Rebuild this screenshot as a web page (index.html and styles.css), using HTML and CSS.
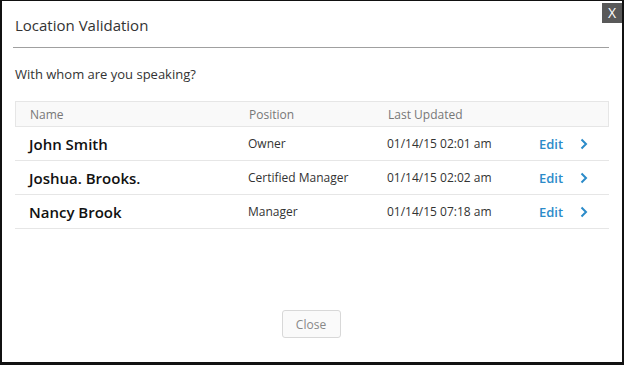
FILE: index.html
```html
<!DOCTYPE html>
<html lang="en">
<head>
  <meta charset="UTF-8" />
  <title>Location Validation</title>
  <link rel="stylesheet" href="styles.css">
</head>
<body>
  <div class="modal">
    <button class="close-x">X</button>
    <h2 class="modal-title">Location Validation</h2>
    <p class="question">With whom are you speaking?</p>
    <div class="contacts">
      <div class="row head">
        <span>Name</span>
        <span>Position</span>
        <span>Last Updated</span>
        <span></span>
        <span></span>
      </div>
      <div class="row">
        <span class="name">John Smith</span>
        <span>Owner</span>
        <span>01/14/15 02:01 am</span>
        <a class="edit">Edit</a>
        <svg class="chev" width="8" height="12" viewBox="0 0 8 12"><path d="M1.5 1.5 L6 6 L1.5 10.5" fill="none" stroke="#2b8bc9" stroke-width="2"/></svg>
      </div>
      <div class="row">
        <span class="name">Joshua. Brooks.</span>
        <span>Certified Manager</span>
        <span>01/14/15 02:02 am</span>
        <a class="edit">Edit</a>
        <svg class="chev" width="8" height="12" viewBox="0 0 8 12"><path d="M1.5 1.5 L6 6 L1.5 10.5" fill="none" stroke="#2b8bc9" stroke-width="2"/></svg>
      </div>
      <div class="row">
        <span class="name">Nancy Brook</span>
        <span>Manager</span>
        <span>01/14/15 07:18 am</span>
        <a class="edit">Edit</a>
        <svg class="chev" width="8" height="12" viewBox="0 0 8 12"><path d="M1.5 1.5 L6 6 L1.5 10.5" fill="none" stroke="#2b8bc9" stroke-width="2"/></svg>
      </div>
    </div>
    <div class="footer">
      <button class="close-btn">Close</button>
    </div>
  </div>
</body>
</html>
```

FILE: styles.css
```css
html, body {
  margin: 0;
  padding: 0;
  background: #fff;
}
body {
  font-family: "Open Sans", sans-serif;
  color: #222;
}
.modal {
  position: relative;
  box-sizing: border-box;
  width: 624px;
  height: 365px;
  border: 2px solid #111;
  border-top-width: 1px;
  border-bottom-width: 3px;
  padding: 0 13px 24px 11px;
  display: flex;
  flex-direction: column;
  background: #fff;
}
.close-x {
  position: absolute;
  top: 2px;
  right: 0;
  width: 20px;
  height: 20px;
  padding: 0;
  border: none;
  background: #595959;
  color: #fff;
  font-family: "Open Sans", sans-serif;
  font-size: 14px;
  line-height: 20px;
  cursor: pointer;
}
.modal-title {
  margin: 0;
  padding: 14px 0 0 2px;
  height: 32px;
  font-size: 15px;
  font-weight: 400;
  color: #333;
  border-bottom: 1px solid #a0a0a0;
}
.question {
  margin: 17px 0 0 2px;
  font-size: 13px;
  color: #333;
  line-height: 18px;
}
.contacts {
  margin: 18px 0 0 2px;
}
.row {
  display: grid;
  grid-template-columns: 219px 139px 152px 41px 1fr;
  align-items: center;
  height: 33px;
  padding-left: 14px;
  border-bottom: 1px solid #e6e6e6;
  font-size: 12px;
  color: #333;
}
.row.head {
  height: 24px;
  background: #f9f9f9;
  border: 1px solid #e6e6e6;
  color: #777;
}
.name {
  font-size: 15px;
  font-weight: 600;
  color: #111;
}
.edit {
  font-size: 13px;
  font-weight: 600;
  color: #2b8bc9;
  cursor: pointer;
}
.chev {
  display: block;
}
.footer {
  margin-top: auto;
  display: flex;
  justify-content: center;
}
.close-btn {
  width: 59px;
  height: 28px;
  border: 1px solid #d8d8d8;
  border-radius: 3px;
  background: #fafafa;
  color: #888;
  font-family: "Open Sans", sans-serif;
  font-size: 12px;
  cursor: pointer;
}
```
